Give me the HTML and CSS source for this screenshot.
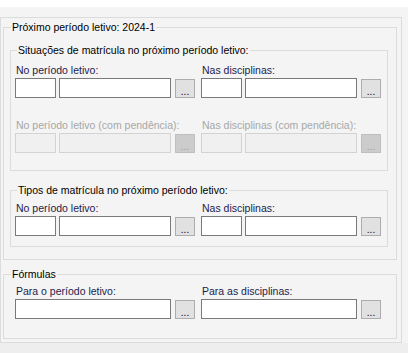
FILE: index.html
```html
<!DOCTYPE html>
<html lang="pt-BR">
<head>
  <meta charset="UTF-8">
  <title>Próximo período letivo</title>
  <link rel="stylesheet" href="styles.css">
</head>
<body>
  <div class="topbar"></div>
  <div class="frame">
    <div class="panel">
      <fieldset class="group">
        <legend>Próximo período letivo: 2024-1</legend>
        <div class="group-body">
          <fieldset class="sub">
            <legend>Situações de matrícula no próximo período letivo:</legend>
            <div class="sub-body situacoes">
              <div class="field">
                <label>No período letivo:</label>
                <div class="row"><input class="code" type="text"><input class="desc" type="text"><button>...</button></div>
              </div>
              <div class="field">
                <label>Nas disciplinas:</label>
                <div class="row"><input class="code" type="text"><input class="desc" type="text"><button>...</button></div>
              </div>
              <div class="field disabled">
                <label>No período letivo (com pendência):</label>
                <div class="row"><input class="code" type="text" disabled><input class="desc" type="text" disabled><button disabled>...</button></div>
              </div>
              <div class="field disabled">
                <label>Nas disciplinas (com pendência):</label>
                <div class="row"><input class="code" type="text" disabled><input class="desc" type="text" disabled><button disabled>...</button></div>
              </div>
            </div>
          </fieldset>
          <fieldset class="sub tipos">
            <legend>Tipos de matrícula no próximo período letivo:</legend>
            <div class="sub-body">
              <div class="field">
                <label>No período letivo:</label>
                <div class="row"><input class="code" type="text"><input class="desc" type="text"><button>...</button></div>
              </div>
              <div class="field">
                <label>Nas disciplinas:</label>
                <div class="row"><input class="code" type="text"><input class="desc" type="text"><button>...</button></div>
              </div>
            </div>
          </fieldset>
        </div>
      </fieldset>
      <fieldset class="group formulas">
        <legend>Fórmulas</legend>
        <div class="formulas-body">
          <div class="field">
            <label>Para o período letivo:</label>
            <div class="row"><input class="wide" type="text"><button>...</button></div>
          </div>
          <div class="field">
            <label>Para as disciplinas:</label>
            <div class="row"><input class="wide" type="text"><button>...</button></div>
          </div>
        </div>
      </fieldset>
    </div>
  </div>
</body>
</html>
```

FILE: styles.css
```css
* { box-sizing: border-box; }
body { margin: 0; background: #eeeeee; font-family: 'Liberation Sans', Arial, sans-serif; font-size: 10.5px; color: #000; }
.topbar { height: 7px; background: #ffffff; }
.frame { background: #f4f4f4; padding-top: 10px; }
.panel { width: 402px; border: 1px solid #dcdcdc; padding: 3px 4px 3px 2px; }

fieldset { margin: 0; padding: 0; border: 1px solid #dcdcdc; min-width: 0; }
legend { padding: 0 1px; margin-left: 7px; line-height: 13px; color: #000; }

.group-body { padding: 10px 8px 12px 6px; }
.sub-body { display: grid; grid-template-columns: 180px 180px; column-gap: 6px; row-gap: 21px; padding: 5px 6px 10px 4px; }
.sub-body.situacoes { padding-top: 7px; padding-bottom: 17px; }
.sub legend { margin-left: 6px; }
.tipos { margin-top: 13px; }

.formulas { margin-top: 8px; }
.formulas-body { display: grid; grid-template-columns: 180px 180px; column-gap: 6px; padding: 4px 15px 19px 11px; }

.field label { display: block; line-height: 13px; margin-bottom: 1px; padding-left: 1px; color: #1c1c4c; }
.row { display: flex; align-items: flex-end; }
.row input { height: 20px; border: 1px solid #7a7a7a; background: #fff; padding: 0 2px; font: inherit; }
.row .code { width: 41px; margin-right: 3px; }
.row .desc { width: 112px; margin-right: 4px; }
.row .wide { width: 156px; margin-right: 4px; }
.row button { width: 20px; height: 19px; padding: 6px 0 0; border: 1px solid #adadad; background: #e1e1e1; font: inherit; font-size: 10px; line-height: 10px; color: #000; }

.field.disabled label { color: #a7a7a7; }
.field.disabled input { background: #f0f0f0; border-color: #d3d3d3; }
.field.disabled button { background: #cccccc; border-color: #bfbfbf; color: #9a9a9a; }
```
